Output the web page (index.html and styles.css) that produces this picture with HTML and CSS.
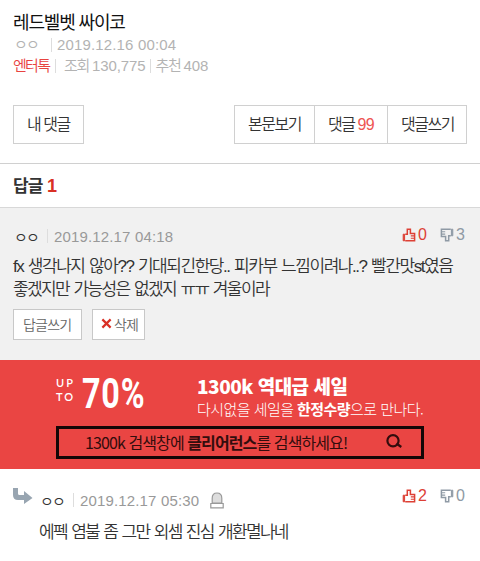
FILE: index.html
```html
<!doctype html>
<html lang="ko">
<head>
<meta charset="utf-8">
<title>레드벨벳 싸이코</title>
<meta name="viewport" content="width=device-width, initial-scale=1">
<link rel="stylesheet" href="styles.css">
</head>
<body>

<svg width="0" height="0" class="defs">
  <symbol id="thumb" viewBox="0 0 14 14">
    <path d="M1.2 6.2V12.8H2.6V6.2Z" fill="currentColor" stroke="currentColor"/>
    <path d="M3.2 6.2H5.3V1.2H8.4V5.5H12.6V12.8H3.2" fill="none" stroke="currentColor" stroke-width="1.5"/>
    <path d="M8.8 7.9H12.5M8.8 10.3H12.5" stroke="currentColor" stroke-width="1.1"/>
  </symbol>
</svg>

<header class="post">
  <h1>레드벨벳 싸이코</h1>
  <div class="meta"><span class="nick">ㅇㅇ</span><i class="bar"></i><span class="date">2019.12.16 00:04</span></div>
  <div class="meta stats"><span class="cat">엔터톡</span><i class="bar"></i><span class="label">조회</span><span class="num">130,775</span><i class="bar bar2"></i><span class="label">추천</span><span class="num">408</span></div>
</header>

<nav class="tools">
  <a class="btn mine">내 댓글</a>
  <div class="group">
    <a class="btn">본문보기</a>
    <a class="btn">댓글 <em>99</em></a>
    <a class="btn">댓글쓰기</a>
  </div>
</nav>

<h2>답글 <b>1</b></h2>

<!-- 댓글 -->
<section class="comment">
  <div class="info">
    <span class="nick">ㅇㅇ</span><i class="bar"></i><span class="date">2019.12.17 04:18</span>
    <span class="votes">
      <svg class="up"><use href="#thumb"/></svg><span class="good">0</span>
      <svg class="down"><use href="#thumb"/></svg><span class="bad">3</span>
    </span>
  </div>
  <p><span class="line1">fx 생각나지 않아?? 기대되긴한당.. 피카부 느낌이려나..? 빨간맛st였음</span><br>좋겠지만 가능성은 없겠지 ㅠㅠ 겨울이라</p>
  <div class="actions">
    <a class="small write">답글쓰기</a>
    <a class="small del"><svg viewBox="0 0 12 12"><path d="M1.5 1.5L10.5 10.5M10.5 1.5L1.5 10.5"/></svg>삭제</a>
  </div>
</section>

<!-- 배너 -->
<section class="banner">
  <div class="ad">
    <div class="top">
      <div class="upto"><div>UP</div><div>TO</div></div>
      <div class="percent"><span>70%</span></div>
      <div class="copy">
        <div class="sale">1300k 역대급 세일</div>
        <div class="desc">다시없을 세일을 <b>한정수량</b>으로 만나다.</div>
      </div>
    </div>
    <div class="search">
      <span class="query">1300k 검색창에 <b>클리어런스</b>를 검색하세요!</span>
      <svg viewBox="0 0 18 15"><circle cx="8" cy="6.8" r="5.6"/><path d="M11.5 9.5L16.3 13"/></svg>
    </div>
  </div>
</section>

<!-- 대댓글 -->
<section class="reply">
  <div class="info">
    <svg class="arrow" viewBox="0 0 20 17"><path d="M0 0H5V5.5Q5 7 6.5 7H11V3L19.5 10L11 16V12H5Q0 12 0 7Z"/></svg>
    <span class="nick">ㅇㅇ</span><i class="bar"></i><span class="date">2019.12.17 05:30</span>
    <svg class="bell" viewBox="0 0 14 17"><path d="M2.2 11V6.2Q2.2 1 7 1T11.8 6.2V11Z" fill="#ddd"/><path d="M.8 11.5H13.2V15.8H.8Z" fill="#fff"/></svg>
    <span class="votes">
      <svg class="up"><use href="#thumb"/></svg><span class="good">2</span>
      <svg class="down"><use href="#thumb"/></svg><span class="bad">0</span>
    </span>
  </div>
  <p>에펙 염불 좀 그만 외셈 진심 개환멸나네</p>
</section>

</body>
</html>
```

FILE: styles.css
```css
*{box-sizing:border-box;margin:0;padding:0;}
body{
  font-family:"Liberation Sans","Noto Sans CJK KR",sans-serif;
  font-size:16px;
  font-weight:350;
  color:#333;
  background:#fff;
}
i,em{font-style:normal;}
svg{display:block;flex:none;}
.defs{position:absolute;}

.post{height:105px;padding:12px 13px 0;}
h1{font-size:18px;line-height:23px;font-weight:400;letter-spacing:-1.15px;color:#111;}
.meta{display:flex;align-items:center;height:20px;font-size:15px;line-height:20px;color:#b3b3b3;}
.nick{width:25px;padding-left:1px;font-size:15px;letter-spacing:-1.8px;white-space:nowrap;}
.bar{width:1px;height:14px;background:#ddd;}
.date{margin-left:7px;font-size:15px;letter-spacing:.15px;white-space:nowrap;}
.meta .bar{margin-left:13px;}
.meta .date{margin-left:5px;}
.stats{height:22px;}
.stats .cat{width:37px;letter-spacing:-1.7px;color:#e8433f;}
.stats .bar{margin-left:5px;margin-right:8px;}
.stats .label{width:28px;letter-spacing:-1.3px;}
.stats .num{letter-spacing:-.1px;}
.stats .bar2{margin:0 5px 0 4px;}

.tools{display:flex;justify-content:space-between;height:58px;padding:0 13px;}
.btn{display:block;height:39px;padding:0 13px;border:1px solid #d0d0d0;font-size:16px;line-height:37px;letter-spacing:-1.5px;white-space:nowrap;}
.mine{width:71px;}
.group{display:flex;}
.group .btn{width:81px;}
.group .btn+.btn{width:74px;margin-left:-1px;}
.group .btn:last-child{width:80px;}
.btn em{letter-spacing:-.6px;color:#ee5552;}

h2{height:45px;padding:0 13px;border-top:1px solid #d0d0d0;border-bottom:1px solid #d8d8d8;font-size:17px;line-height:45px;letter-spacing:-1px;word-spacing:1px;color:#333;}
h2 b{font-size:18px;color:#d93025;}

.comment{height:152px;padding:18px 13px 0;background:#f1f1f1;}
.info{display:flex;align-items:center;height:20px;}
.info .bar{margin-left:9px;}
.info .date{margin-left:6px;color:#999;}
.votes{display:flex;margin-left:auto;align-items:center;height:20px;font-size:16px;}
.comment .votes{margin-top:-2px;}
.votes svg{width:14px;height:14px;}
.up,.good{color:#dd4035;}
.down,.bad{color:#8f9aa5;}
.down{transform:rotate(180deg);}
.good{width:24px;padding-left:2px;}
.bad{width:13px;padding-left:2px;}
p{font-size:17px;line-height:23px;letter-spacing:-1.6px;word-spacing:1.2px;white-space:nowrap;}
.line1{letter-spacing:-1.45px;}
.comment p{margin-top:9px;}
.actions{display:flex;gap:10px;margin-top:8px;}
.small{display:flex;align-items:center;height:31px;padding-bottom:2px;border:1px solid #c8c8c8;background:#fff;font-size:14px;letter-spacing:-.8px;color:#666;}
.write{width:69px;padding-left:9px;}
.del{width:53px;padding-left:8px;}
.del svg{width:11px;height:11px;margin-right:2px;}
.del path{stroke:#d93025;stroke-width:2.4;}

.banner{height:109px;background:#ea4543;color:#fff;}
.ad{width:368px;margin-left:56px;}
.top{display:flex;height:66px;}
.upto{width:26px;padding-top:16px;font:600 11px/14px Lato,sans-serif;letter-spacing:2px;}
.upto div{height:14px;}
.percent{width:115px;padding-top:10px;}
.percent span{display:block;width:90px;font:700 42px/47px Roboto,sans-serif;letter-spacing:1px;transform:scaleX(.77);transform-origin:0 0;}
.copy{white-space:nowrap;}
.sale{height:39px;padding-top:14px;font:900 19px/24px "Noto Sans CJK KR",sans-serif;letter-spacing:-.5px;}
.desc{font:300 15px/20px "Noto Sans CJK KR",sans-serif;letter-spacing:-.55px;}
.desc b{font-weight:700;}
.search{display:flex;align-items:center;height:33px;padding-bottom:2px;border:3px solid #150606;color:#330d0d;}
.query{width:300px;padding-left:26px;font:400 16px/24px "Noto Sans CJK KR",sans-serif;letter-spacing:-.9px;white-space:nowrap;}
.search svg{width:18px;height:15px;margin-left:26px;fill:none;stroke:#330d0d;stroke-width:2.2;}

.reply{padding:21px 13px 0;}
.arrow{width:20px;height:17px;margin-top:-7px;fill:#98a5b1;}
.reply .nick{margin-left:6px;}
.bell{width:14px;height:17px;margin-left:11px;stroke:#999;stroke-width:1.2;}
.reply .votes{margin-top:-8px;}
.reply p{margin:11px 0 0 26px;letter-spacing:-1.68px;}
```
